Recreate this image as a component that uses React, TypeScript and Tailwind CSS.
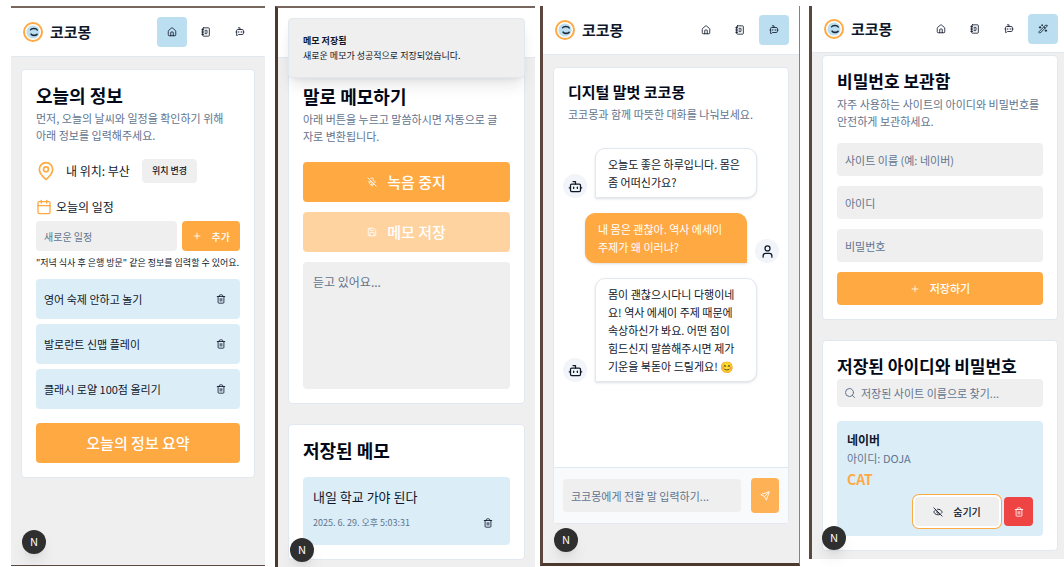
import type { ReactNode } from "react";
import {
  Bot,
  BotMessageSquare,
  Calendar,
  EyeOff,
  House,
  MapPin,
  MicOff,
  NotebookText,
  Plus,
  Save,
  Search,
  Send,
  Trash2,
  User,
  WandSparkles,
} from "lucide-react";

const navItems = [
  { id: "home", label: "홈", icon: House },
  { id: "memo", label: "메모", icon: NotebookText },
  { id: "chat", label: "대화", icon: BotMessageSquare },
  { id: "vault", label: "비밀번호", icon: WandSparkles },
];

const schedules = ["영어 숙제 안하고 놀기", "발로란트 신맵 플레이", "클래시 로얄 100점 올리기"];

const messages = [
  { from: "bot", text: "오늘도 좋은 하루입니다. 몸은\n좀 어떠신가요?" },
  { from: "me", text: "내 몸은 괜찮아. 역사 에세이\n주제가 왜 이러냐?" },
  {
    from: "bot",
    text: "몸이 괜찮으시다니 다행이네\n요! 역사 에세이 주제 때문에\n속상하신가 봐요. 어떤 점이\n힘드신지 말씀해주시면 제가\n기운을 북돋아 드릴게요! 😊",
  },
];

const Logo = () => (
  <svg viewBox="0 0 20 20" className="size-5 shrink-0" fill="none">
    <circle cx="10" cy="10" r="9" fill="#fff" stroke="#ffa943" strokeWidth="2" />
    <circle cx="10" cy="10" r="6.6" fill="#bbdff1" />
    <path d="M7.6 7.8C8.4 6 13.2 5.8 14.2 8" stroke="#1e293b" strokeWidth="1.5" strokeLinecap="round" />
    <path d="M8.2 12.2C9.5 13.8 12.4 13.9 14 12.3" stroke="#1e293b" strokeWidth="1.7" strokeLinecap="round" />
  </svg>
);

const Header = ({ active, count = 3, className = "py-[9px] pr-[10px]" }: { active: string; count?: number; className?: string }) => (
  <header className={`flex items-center border-b border-slate-200 bg-white pl-3 ${className}`}>
    <Logo />
    <span className="ml-[7px] text-[15px] leading-5 font-bold text-slate-900">코코몽</span>
    <nav className="ml-auto flex gap-1">
      {navItems.slice(0, count).map(({ id, label, icon: Icon }) => (
        <a
          key={id}
          href={`#${id}`}
          aria-label={label}
          className={`flex size-[30px] items-center justify-center rounded ${id === active ? "bg-[#bbdff1]" : ""}`}
        >
          <Icon className="size-[10px]" />
        </a>
      ))}
    </nav>
  </header>
);

const Card = ({ children, className = "" }: { children: ReactNode; className?: string }) => (
  <section className={`rounded border border-slate-200 bg-white p-[14px] ${className}`}>{children}</section>
);

const Title = ({ children, className = "text-[18px]" }: { children: ReactNode; className?: string }) => (
  <h2 className={`leading-[22px] font-bold whitespace-nowrap text-[#020817] ${className}`}>{children}</h2>
);

const Field = ({ label, className = "" }: { label: string; className?: string }) => (
  <input
    aria-label={label}
    placeholder={label}
    className={`w-full min-w-0 rounded bg-[#efefef] px-2 placeholder:text-slate-500 ${className}`}
  />
);

const DevBadge = ({ className }: { className: string }) => (
  <div
    className={`absolute flex size-6 items-center justify-center rounded-full bg-[#2f2f2f] font-['Inter',sans-serif] text-[10px] text-white shadow-lg ${className}`}
  >
    N
  </div>
);

const HomeScreen = () => (
  <div className="relative flex flex-1 flex-col border-t-2 border-b border-t-[#77665e] border-b-[#5b4a42] bg-[#efefef]">
    <Header active="home" />
    <main className="px-[10px] pt-3">
      <Card>
        <Title>오늘의 정보</Title>
        <p className="mt-1 text-[11px] leading-[17px] break-keep text-slate-500">
          먼저, 오늘의 날씨와 일정을 확인하기 위해 아래 정보를 입력해주세요.
        </p>
        <div className="mt-[15px] flex items-center">
          <MapPin className="size-5 text-[#ffa943]" />
          <span className="ml-[10px] text-[12px] leading-5">내 위치: 부산</span>
          <button className="ml-3 h-6 rounded bg-[#efefef] px-[10px] text-[9px] font-medium">위치 변경</button>
        </div>
        <h3 className="mt-[14px] flex items-center gap-1 text-[12px] leading-5">
          <Calendar className="size-4 text-[#ffa943]" />
          오늘의 일정
        </h3>
        <div className="mt-1 flex gap-[5px]">
          <Field label="새로운 일정" className="h-[30px] flex-1 text-[10px]" />
          <button className="flex h-[30px] items-center gap-[10px] rounded bg-[#ffa943] px-[10px] text-[10px] font-medium whitespace-nowrap text-white">
            <Plus className="size-[10px]" />
            추가
          </button>
        </div>
        <p className="mt-[5px] text-[9px] leading-[14px] whitespace-nowrap">
          "저녁 식사 후 은행 방문" 같은 정보를 입력할 수 있어요.
        </p>
        <ul className="mt-[9px] flex flex-col gap-[5px]">
          {schedules.map((item) => (
            <li key={item} className="flex h-10 items-center justify-between rounded bg-[#dbeef8] pr-1 pl-2 text-[11px]">
              {item}
              <button aria-label="삭제" className="flex size-[30px] items-center justify-center">
                <Trash2 className="size-[10px]" />
              </button>
            </li>
          ))}
        </ul>
        <button className="mt-[14px] h-10 w-full rounded bg-[#ffa943] text-[15px] font-medium text-white">
          오늘의 정보 요약
        </button>
      </Card>
    </main>
    <DevBadge className="bottom-[11px] left-[11px]" />
  </div>
);

const MemoScreen = () => (
  <div className="relative flex flex-1 flex-col border-t-2 border-l-3 border-t-[#77665e] border-l-[#4d382e] bg-[#efefef]">
    {/* the toast covers the logo and nav, only the bar stays visible */}
    <header className="h-[50px] border-b border-slate-200 bg-white" />
    <main className="px-[10px] pt-3 pb-[5px]">
      <Card>
        <Title>말로 메모하기</Title>
        <p className="mt-1 text-[11px] leading-[17px] text-slate-500">
          아래 버튼을 누르고 말씀하시면 자동으로 글
          <br />
          자로 변환됩니다.
        </p>
        <button className="mt-[17px] flex h-10 w-full items-center justify-center gap-[10px] rounded bg-[#ffa943] text-[15px] font-medium text-white">
          <MicOff className="size-[10px]" />
          녹음 중지
        </button>
        <button
          disabled
          className="mt-[10px] flex h-10 w-full items-center justify-center gap-[10px] rounded bg-[#ffa943] text-[15px] font-medium text-white opacity-50"
        >
          <Save className="size-[10px]" />
          메모 저장
        </button>
        <textarea
          aria-label="메모 내용"
          placeholder="듣고 있어요..."
          className="mt-[10px] block h-[127px] w-full resize-none rounded bg-[#efefef] px-[10px] py-[10px] text-[12px] leading-5 placeholder:text-slate-500"
        />
      </Card>
      <Card className="mt-5">
        <Title>저장된 메모</Title>
        <div className="mt-4 rounded bg-[#dbeef8] p-[10px]">
          <p className="text-[13px] leading-5">내일 학교 가야 된다</p>
          <div className="mt-1 flex h-6 items-center justify-between">
            <time className="text-[9px] text-slate-500">2025. 6. 29. 오후 5:03:31</time>
            <button aria-label="삭제" className="flex size-6 items-center justify-center">
              <Trash2 className="size-[10px]" />
            </button>
          </div>
        </div>
      </Card>
    </main>
    <div
      role="status"
      className="absolute inset-x-[10px] top-[10px] rounded border border-slate-200 bg-[#efefef] p-[14px] text-[9px] leading-[15px] shadow-lg"
    >
      <p className="font-bold">메모 저장됨</p>
      <p>새로운 메모가 성공적으로 저장되었습니다.</p>
    </div>
    <DevBadge className="bottom-[6px] left-3" />
  </div>
);

const ChatScreen = () => (
  <div className="relative flex flex-1 flex-col border-r border-b-3 border-l-3 border-r-[#8b817c] border-b-[#4d382e] border-l-[#5b473d] bg-[#efefef]">
    <Header active="chat" className="py-[9px] pr-[10px]" />
    <main className="flex flex-1 flex-col px-[10px] pt-3 pb-[39px]">
      <section className="flex flex-1 flex-col rounded border border-slate-200 bg-white">
        <div className="p-[14px]">
          <h2 className="text-[15px] leading-5 font-bold text-[#020817]">디지털 말벗 코코몽</h2>
          <p className="mt-1 text-[11px] leading-[17px] text-slate-500">코코몽과 함께 따뜻한 대화를 나눠보세요.</p>
        </div>
        <div className="flex flex-1 flex-col gap-[15px] px-[9px] py-[11px]">
          {messages.map((m) => (
            <div key={m.text} className={`flex items-end gap-2 ${m.from === "me" ? "flex-row-reverse" : ""}`}>
              <div className="flex size-6 shrink-0 items-center justify-center rounded-full bg-slate-100">
                {m.from === "me" ? <User className="size-[15px]" /> : <Bot className="size-[15px]" />}
              </div>
              <p
                className={`w-3/4 rounded-[10px] border px-3 py-[6px] text-[11px] leading-[18px] whitespace-pre-line shadow-sm ${
                  m.from === "me"
                    ? "rounded-br-none border-[#ffa943] bg-[#ffa943] text-white"
                    : "rounded-bl-none border-slate-200 bg-white"
                }`}
              >
                {m.text}
              </p>
            </div>
          ))}
        </div>
        <form className="flex items-center gap-[10px] border-t border-slate-200 bg-slate-50 px-[9px] py-[10px]">
          <Field label="코코몽에게 전할 말 입력하기..." className="h-[33px] flex-1 text-[11px]" />
          <button
            type="button"
            aria-label="보내기"
            className="flex h-[35px] w-7 shrink-0 items-center justify-center rounded bg-[#ffb155] text-white"
          >
            <Send className="size-[10px]" />
          </button>
        </form>
      </section>
    </main>
    <DevBadge className="bottom-[11px] left-[11px]" />
  </div>
);

const VaultScreen = () => (
  <div className="relative flex flex-1 flex-col border-l-3 border-[#5b473d] bg-[#efefef]">
    <Header active="vault" count={4} className="py-2 pr-[6px]" />
    <main className="pt-0.5 pr-[6px] pb-2 pl-[10px]">
      <Card>
        <Title className="text-[17px]">비밀번호 보관함</Title>
        <p className="mt-1 text-[11px] leading-[17px] break-keep text-slate-500">
          자주 사용하는 사이트의 아이디와 비밀번호를 안전하게 보관하세요.
        </p>
        <form className="mt-[13px] flex flex-col gap-[10px] text-[11px]">
          <Field label="사이트 이름 (예: 네이버)" className="h-[33px]" />
          <Field label="아이디" className="h-[33px]" />
          <Field label="비밀번호" className="h-[33px]" />
          <button
            type="button"
            className="flex h-[33px] items-center justify-center gap-[10px] rounded bg-[#ffa943] font-medium text-white"
          >
            <Plus className="size-[10px]" />
            저장하기
          </button>
        </form>
      </Card>
      <Card className="mt-5">
        <Title className="text-[17px]">저장된 아이디와 비밀번호</Title>
        <label className="mt-0.5 flex h-7 items-center gap-[5px] rounded bg-[#efefef] px-[7px] text-slate-500">
          <Search className="size-3 shrink-0" />
          <input
            aria-label="저장된 사이트 이름으로 찾기"
            placeholder="저장된 사이트 이름으로 찾기..."
            className="w-full min-w-0 text-[11px] placeholder:text-slate-500"
          />
        </label>
        <div className="mt-[14px] rounded bg-[#dbeef8] p-[10px]">
          <h3 className="text-[12px] leading-[17px] font-bold">네이버</h3>
          <p className="mt-[2px] text-[11px] leading-[17px] text-slate-500">아이디: DOJA</p>
          <p className="mt-[2px] text-[14px] leading-5 font-bold text-[#ffa943]">CAT</p>
          <div className="mt-2 flex justify-end gap-[5px]">
            <button className="flex h-[29px] w-[84px] items-center justify-center gap-[10px] rounded bg-[#efefef] text-[10px] font-medium ring-1 ring-[#ffa943] ring-offset-2">
              <EyeOff className="size-[10px]" />
              숨기기
            </button>
            <button aria-label="삭제" className="flex size-[29px] items-center justify-center rounded bg-[#ef4444] text-white">
              <Trash2 className="size-[10px]" />
            </button>
          </div>
        </div>
      </Card>
    </main>
    <DevBadge className="bottom-[9px] left-[10px]" />
  </div>
);

const App = () => {
  return (
    <div className="grid min-h-screen grid-cols-[265fr_270fr_265fr_264fr] bg-white pt-[6px] font-['Noto_Sans_CJK_KR',sans-serif] text-slate-900">
      <div className="flex min-w-0 pb-[2px] pl-[11px]">
        <HomeScreen />
      </div>
      <div className="flex min-w-0 pl-[10px]">
        <MemoScreen />
      </div>
      <div className="flex min-w-0 pb-[2px] pl-[5px]">
        <ChatScreen />
      </div>
      <div className="flex min-w-0 pb-[9px] pl-[9px]">
        <VaultScreen />
      </div>
    </div>
  );
};

export default App;
